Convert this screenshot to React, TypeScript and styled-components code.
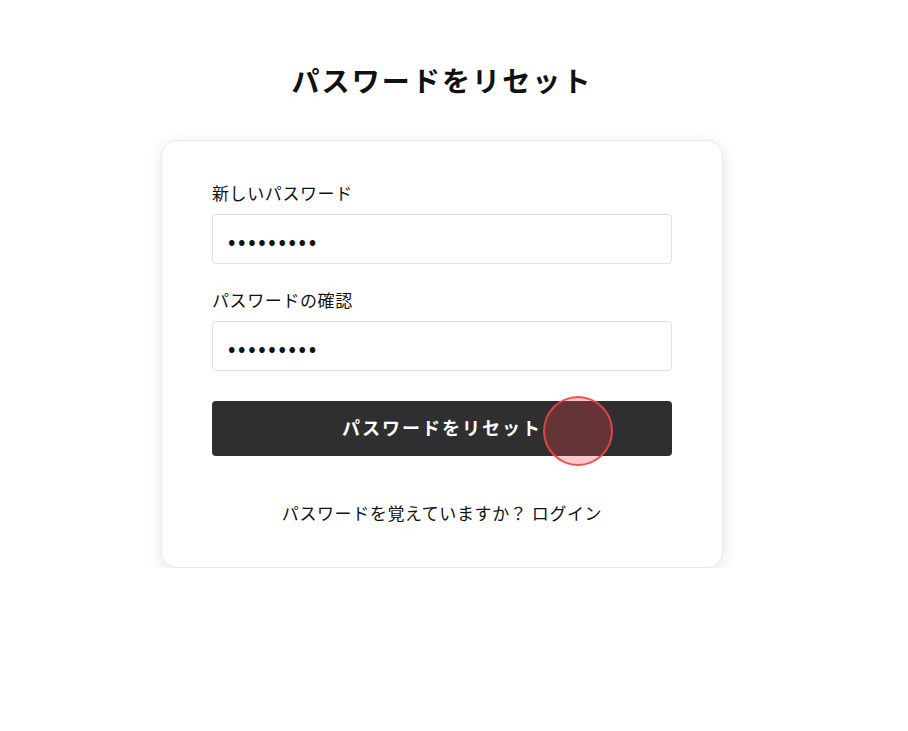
import React from "react";
import styled, { createGlobalStyle } from "styled-components";

const GlobalStyle = createGlobalStyle`
  body {
    margin: 0;
    background: #ffffff;
    font-family: "Noto Sans CJK JP", "Noto Sans", sans-serif;
    color: #111111;
  }
`;

const Page = styled.main`
  display: flex;
  flex-direction: column;
  align-items: center;
  padding: 58px 24px 0 0;
`;

const Title = styled.h1`
  margin: 0 0 38px;
  font-size: 28px;
  line-height: 44px;
  font-weight: 700;
  letter-spacing: 2.1px;
  color: #111111;
`;

const Card = styled.div`
  width: 562px;
  box-sizing: border-box;
  padding: 41px 50px 42px;
  background: #ffffff;
  border: 1px solid #e9e9e9;
  border-radius: 16px;
  box-shadow: 0 4px 16px rgba(0, 0, 0, 0.1);
`;

const Form = styled.form`
  display: flex;
  flex-direction: column;
`;

const Field = styled.div`
  display: flex;
  flex-direction: column;
  gap: 10px;
  margin-bottom: 25px;
`;

const Label = styled.label`
  font-size: 17px;
  line-height: 22px;
  letter-spacing: 0.6px;
  color: #111111;
`;

const Input = styled.input`
  height: 50px;
  box-sizing: border-box;
  padding: 0 15px;
  border: 1px solid #e0e0e0;
  border-radius: 4px;
  font-family: inherit;
  font-size: 22px;
  letter-spacing: 2.6px;
  color: #111111;
  outline: none;
`;

const SubmitWrap = styled.div`
  position: relative;
  margin-top: 5px;
`;

const Submit = styled.button`
  width: 100%;
  height: 55px;
  padding: 0 0 3px;
  border: none;
  border-radius: 4px;
  background: #2f2f31;
  color: #ffffff;
  font-family: inherit;
  font-size: 18px;
  font-weight: 700;
  letter-spacing: 2px;
  cursor: pointer;
`;

const ClickMark = styled.span`
  position: absolute;
  left: 331px;
  top: -5px;
  width: 66px;
  height: 66px;
  border: 2px solid rgba(240, 70, 70, 0.9);
  border-radius: 50%;
  background: rgba(239, 68, 68, 0.28);
  pointer-events: none;
`;

const Footer = styled.p`
  margin: 45px 0 0;
  text-align: center;
  font-size: 17px;
  line-height: 24px;
  letter-spacing: 0.6px;
  color: #111111;
`;

const LoginLink = styled.a`
  color: inherit;
  text-decoration: none;
`;

export default function App() {
  return (
    <>
      <GlobalStyle />
      <Page>
        <Title>パスワードをリセット</Title>
        <Card>
          <Form onSubmit={(e) => e.preventDefault()}>
            <Field>
              <Label htmlFor="new-password">新しいパスワード</Label>
              <Input id="new-password" type="password" defaultValue="123456789" />
            </Field>
            <Field>
              <Label htmlFor="confirm-password">パスワードの確認</Label>
              <Input id="confirm-password" type="password" defaultValue="123456789" />
            </Field>
            <SubmitWrap>
              <Submit type="submit">パスワードをリセット</Submit>
              <ClickMark />
            </SubmitWrap>
          </Form>
          <Footer>
            パスワードを覚えていますか？ <LoginLink href="#">ログイン</LoginLink>
          </Footer>
        </Card>
      </Page>
    </>
  );
}
